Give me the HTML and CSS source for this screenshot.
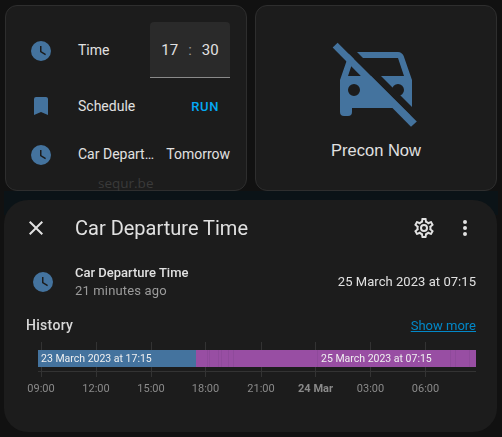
FILE: index.html
```html
<!DOCTYPE html>
<html lang="en-GB">
<head>
<title>Car Departure Time</title>
<meta charset="utf-8">
<link rel="stylesheet" href="styles.css">
</head>
<body>

<div class="cards">
  <div class="card rows">
    <div class="row row-time">
      <svg class="icon" viewBox="0 0 24 24"><path d="M12,2A10,10 0 0,0 2,12A10,10 0 0,0 12,22A10,10 0 0,0 22,12A10,10 0 0,0 12,2M16.2,16.2L11,13V7H12.5V12.2L17,14.9L16.2,16.2Z"/></svg>
      <span class="name">Time</span>
      <div class="time-input">
        <span>17</span><span class="colon">:</span><span>30</span>
      </div>
    </div>
    <div class="row row-schedule">
      <svg class="icon" viewBox="0 0 24 24"><path d="M17,3H7A2,2 0 0,0 5,5V21L12,18L19,21V5C19,3.89 18.1,3 17,3Z"/></svg>
      <span class="name">Schedule</span>
      <span class="run">RUN</span>
    </div>
    <div class="row row-depart">
      <svg class="icon" viewBox="0 0 24 24"><path d="M12,2A10,10 0 0,0 2,12A10,10 0 0,0 12,22A10,10 0 0,0 22,12A10,10 0 0,0 12,2M16.2,16.2L11,13V7H12.5V12.2L17,14.9L16.2,16.2Z"/></svg>
      <span class="name">Car Depart…</span>
      <span class="value">Tomorrow</span>
    </div>
    <span class="watermark">sequr.be</span>
  </div>

  <div class="card precon">
    <svg class="car-icon" viewBox="0 0 24 24">
      <clipPath id="car-cut"><path d="M0,0.27L23.73,24H0ZM2.25,0H24V21.75Z"/></clipPath>
      <path clip-path="url(#car-cut)" fill-rule="evenodd" d="M5,11L6.5,6.5H17.5L19,11ZM17.5,16A1.5,1.5 0 0,1 16,14.5A1.5,1.5 0 0,1 17.5,13A1.5,1.5 0 0,1 19,14.5A1.5,1.5 0 0,1 17.5,16ZM6.5,16A1.5,1.5 0 0,1 5,14.5A1.5,1.5 0 0,1 6.5,13A1.5,1.5 0 0,1 8,14.5A1.5,1.5 0 0,1 6.5,16ZM18.92,6C18.72,5.42 18.16,5 17.5,5H6.5C5.84,5 5.28,5.42 5.08,6L3,12V20A1,1 0 0,0 4,21H5A1,1 0 0,0 6,20V19H18V20A1,1 0 0,0 19,21H20A1,1 0 0,0 21,20V12L18.92,6Z"/>
      <path d="M1.17,3.9L2.4,2.67L22.2,22.4L20.75,23.67Z"/>
    </svg>
    <span class="precon-label">Precon Now</span>
  </div>
</div>

<div class="dialog">
  <div class="dialog-head">
    <svg class="head-icon" viewBox="0 0 24 24"><path d="M19,6.41L17.59,5L12,10.59L6.41,5L5,6.41L10.59,12L5,17.59L6.41,19L12,13.41L17.59,19L19,17.59L13.41,12L19,6.41Z"/></svg>
    <h2>Car Departure Time</h2>
    <svg class="head-icon cog" viewBox="0 0 24 24"><path d="M12,8A4,4 0 0,1 16,12A4,4 0 0,1 12,16A4,4 0 0,1 8,12A4,4 0 0,1 12,8M12,10A2,2 0 0,0 10,12A2,2 0 0,0 12,14A2,2 0 0,0 14,12A2,2 0 0,0 12,10M10,22C9.75,22 9.54,21.82 9.5,21.58L9.13,18.93C8.5,18.68 7.96,18.34 7.44,17.94L4.95,18.95C4.73,19.03 4.46,18.95 4.34,18.73L2.34,15.27C2.21,15.05 2.27,14.78 2.46,14.63L4.57,12.97L4.5,12L4.57,11L2.46,9.37C2.27,9.22 2.21,8.95 2.34,8.73L4.34,5.27C4.46,5.05 4.73,4.96 4.95,5.05L7.44,6.05C7.96,5.66 8.5,5.32 9.13,5.07L9.5,2.42C9.54,2.18 9.75,2 10,2H14C14.25,2 14.46,2.18 14.5,2.42L14.87,5.07C15.5,5.32 16.04,5.66 16.56,6.05L19.05,5.05C19.27,4.96 19.54,5.05 19.66,5.27L21.66,8.73C21.79,8.95 21.73,9.22 21.54,9.37L19.43,11L19.5,12L19.43,13L21.54,14.63C21.73,14.78 21.79,15.05 21.66,15.27L19.66,18.73C19.54,18.95 19.27,19.04 19.05,18.95L16.56,17.95C16.04,18.34 15.5,18.68 14.87,18.93L14.5,21.58C14.46,21.82 14.25,22 14,22H10M11.25,4L10.88,6.61C9.68,6.86 8.62,7.5 7.85,8.39L5.44,7.35L4.69,8.65L6.8,10.2C6.4,11.37 6.4,12.64 6.8,13.8L4.68,15.36L5.43,16.66L7.86,15.62C8.63,16.5 9.68,17.14 10.87,17.38L11.24,20H12.76L13.13,17.39C14.32,17.14 15.37,16.5 16.14,15.62L18.57,16.66L19.32,15.36L17.2,13.81C17.6,12.64 17.6,11.37 17.2,10.2L19.31,8.65L18.56,7.35L16.15,8.39C15.38,7.5 14.32,6.86 13.12,6.62L12.75,4H11.25Z"/></svg>
    <svg class="head-icon dots" viewBox="0 0 24 24"><path d="M12,16A2,2 0 0,1 14,18A2,2 0 0,1 12,20A2,2 0 0,1 10,18A2,2 0 0,1 12,16M12,10A2,2 0 0,1 14,12A2,2 0 0,1 12,14A2,2 0 0,1 10,12A2,2 0 0,1 12,10M12,4A2,2 0 0,1 14,6A2,2 0 0,1 12,8A2,2 0 0,1 10,6A2,2 0 0,1 12,4Z"/></svg>
  </div>

  <div class="state-row">
    <svg class="icon" viewBox="0 0 24 24"><path d="M12,2A10,10 0 0,0 2,12A10,10 0 0,0 12,22A10,10 0 0,0 22,12A10,10 0 0,0 12,2M16.2,16.2L11,13V7H12.5V12.2L17,14.9L16.2,16.2Z"/></svg>
    <div class="state-text">
      <div class="state-name">Car Departure Time</div>
      <div class="state-ago">21 minutes ago</div>
    </div>
    <div class="state-value">25 March 2023 at 07:15</div>
  </div>

  <div class="history-head">
    <span class="history-title">History</span>
    <a class="show-more" href="#">Show more</a>
  </div>

  <div class="timeline">
    <div class="gridlines">
      <i style="left: 16px"></i><i style="left: 71px"></i><i style="left: 126px"></i><i style="left: 180px"></i>
      <i style="left: 236px"></i><i style="left: 290px"></i><i style="left: 345px"></i><i style="left: 400px"></i>
    </div>
    <div class="bar">
      <div class="seg seg-blue">23 March 2023 at 17:15</div>
      <div class="seg seg-purple">
        <i style="left: 11px"></i><i style="left: 13px"></i><i style="left: 22px"></i><i style="left: 25px"></i><i style="left: 32px"></i><i style="left: 37px"></i>
        <i style="left: 121px"></i><i style="left: 254px"></i><i style="left: 259px"></i><i style="left: 273px"></i>
        <span class="seg-label">25 March 2023 at 07:15</span>
      </div>
    </div>
    <div class="axis">
      <span style="left: 3px">09:00</span><span style="left: 58px">12:00</span><span style="left: 113px">15:00</span><span style="left: 167.5px">18:00</span>
      <span style="left: 223px">21:00</span><span class="axis-day" style="left: 277.5px">24 Mar</span><span style="left: 332.5px">03:00</span><span style="left: 387.5px">06:00</span>
    </div>
  </div>
</div>

</body>
</html>
```

FILE: styles.css
```css
html, body { height: 100%; }

body {
  margin: 0;
  width: 502px;
  height: 437px;
  overflow: hidden;
  background: #111 linear-gradient(#0b1317, #0b1317) no-repeat 4px 191px / 494px 24px;
  color: #e1e1e1;
  font-family: Roboto, sans-serif;
  position: relative;
}

svg { fill: currentColor; display: block; }

.icon { width: 24px; height: 24px; color: #44739e; flex: none; }

.cards { display: flex; gap: 8px; padding: 5px 5px 0 5px; }

.card {
  width: 242px;
  height: 186px;
  box-sizing: border-box;
  background: #1c1c1c;
  border: 1px solid #2e2e2e;
  border-radius: 12px;
}

.rows { position: relative; padding: 16px 16px 0 23px; }

.row { display: flex; align-items: center; font-size: 14px; }
.row .name { margin-left: 25px; white-space: nowrap; }

.row-time { height: 56px; }
.row-schedule { height: 56px; }
.row-depart { height: 40px; }

.row-time .icon, .row-depart .icon { margin-top: 2px; }

.time-input {
  margin-left: auto;
  width: 80px;
  height: 56px;
  box-sizing: border-box;
  background: #2a2a2a;
  border-bottom: 1px solid #8a8a8a;
  border-radius: 4px 4px 0 0;
  display: flex;
  align-items: center;
  justify-content: center;
  gap: 10px;
  font-size: 15px;
}
.colon { color: #9b9b9b; }

.run {
  margin-left: auto;
  margin-right: 11px;
  color: #03a9f4;
  font-size: 13px;
  font-weight: 500;
  letter-spacing: 0.6px;
}

.value { margin-left: auto; white-space: nowrap; }

.watermark {
  position: absolute;
  left: 92px;
  top: 168px;
  font-size: 13.5px;
  color: #3a3a3a;
  font-family: "Open Sans", sans-serif;
}

.precon { display: flex; flex-direction: column; align-items: center; padding-top: 26px; }
.car-icon { width: 96px; height: 96px; color: #44739e; }
.precon-label { font-family: "Liberation Sans", sans-serif; font-size: 16.5px; margin-top: 13px; }

/* dialog sits above the cards */
.dialog {
  position: absolute;
  left: 4px;
  top: 200px;
  width: 493px;
  height: 232px;
  background: #1c1c1c;
  border-radius: 24px;
  box-sizing: border-box;
  padding: 0 21px 0 21px;
  filter: blur(0.3px);
}

.dialog-head { display: flex; align-items: center; height: 56px; }
.head-icon { width: 24px; height: 24px; }
.dialog-head svg:first-child { margin-left: -1px; }
.cog { margin-left: auto; margin-right: 17px; }
.dots { margin-right: -1px; }
.dialog-head h2 { margin: 0 0 0 27px; font-size: 20px; font-weight: 400; }

.state-row { display: flex; align-items: center; margin-top: 6px; height: 40px; }
.state-row .icon { margin-left: 6px; }
.state-text { margin-left: 20px; }
.state-name { font-size: 13px; font-weight: 500; line-height: 18px; }
.state-ago { font-size: 13px; color: #9b9b9b; line-height: 18px; letter-spacing: 0.15px; }
.state-value { margin-left: auto; font-size: 13px; letter-spacing: 0.05px; position: relative; top: -1px; }

.history-head { display: flex; justify-content: space-between; align-items: center; margin-top: 15px; }
.history-title { font-size: 14px; font-weight: 500; color: #d8d8d8; margin-left: 1px; letter-spacing: 0.3px; }
.show-more { font-size: 13px; color: #0288c8; }

.timeline { position: relative; margin-top: 9px; height: 56px; }

.gridlines i {
  position: absolute;
  top: 0;
  width: 1px;
  height: 35px;
  background: #333;
}

.bar { position: absolute; top: 8px; left: 13px; right: 0; height: 17px; display: flex; font-size: 10.5px; color: #f0f0f0; }
.seg { height: 100%; line-height: 17px; white-space: nowrap; }
.seg-blue { width: 158px; background: #44739e; padding-left: 3px; box-sizing: border-box; }
.seg-purple { flex: 1; background: #984ea3; position: relative; }
.seg-purple i { position: absolute; top: 0; bottom: 0; width: 1px; background: #8f4a9b; }
.seg-label { position: absolute; left: 125px; top: 0; }

.axis { position: absolute; left: 13px; right: 0; top: 29px; border-top: 1px solid #333; }
.axis span { position: absolute; top: 10px; transform: translateX(-50%); font-size: 11px; color: #8a8a8a; white-space: nowrap; }
.axis .axis-day { font-weight: 700; }
```
